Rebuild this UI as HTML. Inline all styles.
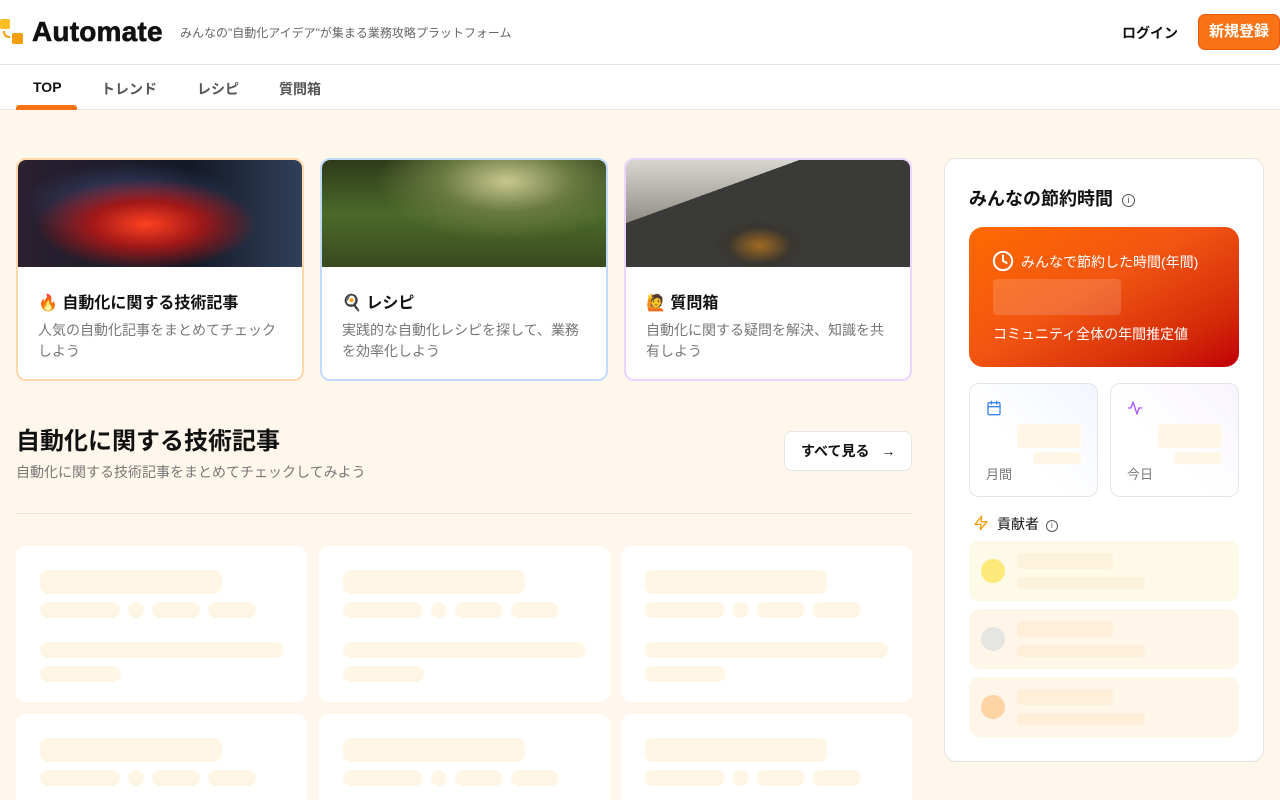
<!DOCTYPE html>
<html><head><meta charset="utf-8"><style>
*{box-sizing:border-box;margin:0;padding:0}
html,body{width:1280px;height:800px;overflow:hidden}
body{background:#fff7ec;font-family:"Liberation Sans","Noto Sans CJK JP",sans-serif;color:#111;position:relative}
.hdr{position:absolute;left:0;top:0;width:1280px;height:65px;background:#fff;border-bottom:1px solid #e5e5e5}
.nav{position:absolute;left:0;top:65px;width:1280px;height:45px;background:#fff;border-bottom:1px solid #e5e5e5}
.nav span{position:absolute;top:14px;font-size:14px;font-weight:bold;color:#555}
.abs{position:absolute}
.card{position:absolute;top:158px;width:288px;height:223px;background:#fff;border-radius:10px;border:2px solid;overflow:hidden}
.card .img{height:107px}
.card h3{position:absolute;left:20px;top:129px;font-size:16px;font-weight:bold}
.card p{position:absolute;left:20px;top:160px;width:250px;font-size:14px;line-height:21px;color:#777}
.sk{position:absolute;background:#fff6e6;border-radius:8px}
.sc{position:absolute;width:291px;height:156px;background:#fff;border-radius:10px}
</style></head><body>
<div class="hdr">
 <div class="abs" style="left:0;top:19px;width:10px;height:10px;background:#fbbf24;border-radius:2px"></div>
 <div class="abs" style="left:3px;top:31px;width:7px;height:7px;border-left:2px solid #f59e0b;border-bottom:2px solid #f59e0b;border-radius:0 0 0 6px"></div>
 <div class="abs" style="left:12px;top:33px;width:11px;height:11px;background:#f59e0b;border-radius:2px"></div>
 <div class="abs" style="left:32px;top:16px;font-size:28px;font-weight:bold;line-height:32px;transform:scaleX(1.0);transform-origin:left;letter-spacing:0.2px;-webkit-text-stroke:0.6px #111">Automate</div>
 <div class="abs" style="left:180px;top:24px;font-size:12px;color:#666">みんなの"自動化アイデア"が集まる業務攻略プラットフォーム</div>
 <div class="abs" style="left:1122px;top:23px;font-size:14px;font-weight:bold">ログイン</div>
 <div class="abs" style="left:1198px;top:14px;width:82px;height:36px;background:#f97316;border:1px solid #ea580c;border-radius:7px;color:#fff;font-size:15px;font-weight:bold;text-align:center;line-height:34px">新規登録</div>
</div>
<div class="nav">
 <span style="left:33px;color:#111">TOP</span><span style="left:101px">トレンド</span><span style="left:197px">レシピ</span><span style="left:279px">質問箱</span>
 <div class="abs" style="left:16px;top:40px;width:61px;height:5px;background:#f97316;border-radius:3px 3px 0 0"></div>
</div>

<div class="card" style="left:16px;border-color:#fed7aa"><div class="img" style="background:radial-gradient(ellipse at 45% 60%,#ff4020 0,#a01818 25%,transparent 50%),radial-gradient(ellipse at 40% 40%,#3a4a78 0,transparent 45%),linear-gradient(90deg,#2a2030,#141826 60%,#30405a)"></div>
<h3>🔥 自動化に関する技術記事</h3><p>人気の自動化記事をまとめてチェックしよう</p></div>
<div class="card" style="left:320px;border-color:#bfdbfe"><div class="img" style="background:radial-gradient(ellipse at 65% 20%,#c8c890 0,#6a7a40 25%,transparent 50%),linear-gradient(180deg,#2e3a1a,#4a6a28 50%,#3a4a20)"></div>
<h3>🍳 レシピ</h3><p>実践的な自動化レシピを探して、業務を効率化しよう</p></div>
<div class="card" style="left:624px;border-color:#e9d5ff"><div class="img" style="background:radial-gradient(ellipse at 47% 80%,#a06a20 0,#3a3630 15%,transparent 22%),linear-gradient(160deg,transparent 30%,#3a3a38 30%),linear-gradient(180deg,#d8d6d0,#9a9890 50%,#6a5a3a)"></div>
<h3>🙋 質問箱</h3><p>自動化に関する疑問を解決、知識を共有しよう</p></div>

<div class="abs" style="left:16px;top:421px;font-size:24px;font-weight:bold">自動化に関する技術記事</div>
<div class="abs" style="left:16px;top:462px;font-size:14px;color:#777">自動化に関する技術記事をまとめてチェックしてみよう</div>
<div class="abs" style="left:784px;top:431px;width:128px;height:40px;background:#fff;border:1px solid #e5e5e5;border-radius:8px;font-size:14px;font-weight:bold;line-height:38px;padding-left:16px">すべて見る <span style="margin-left:8px">→</span></div>
<div class="abs" style="left:16px;top:513px;width:896px;height:1px;background:#e8e0d4"></div>

<div id="sks"></div>
<script>
var h='';[16,319,621].forEach(function(x){[546,714].forEach(function(y){
h+='<div class="sc" style="left:'+x+'px;top:'+y+'px"></div>';
var b=[[24,24,182,24],[24,56,80,16],[112,56,16,16],[136,56,48,16],[192,56,48,16],[24,96,243,16],[24,120,81,16]];
b.forEach(function(r){h+='<div class="sk" style="left:'+(x+r[0])+'px;top:'+(y+r[1])+'px;width:'+r[2]+'px;height:'+r[3]+'px"></div>'});});});
document.getElementById('sks').innerHTML=h;
</script>

<div class="abs" style="left:944px;top:158px;width:320px;height:604px;background:#fff;border:1px solid #e2e2e2;border-radius:12px"></div>
<div class="abs" style="left:969px;top:185px;font-size:18px;font-weight:bold">みんなの節約時間 <span style="display:inline-block;width:13px;height:13px;border:1.3px solid #555;border-radius:50%;font-size:9px;line-height:11px;text-align:center;vertical-align:2px;margin-left:4px;font-weight:normal;color:#555">i</span></div>
<div class="abs" style="left:969px;top:227px;width:270px;height:140px;border-radius:14px;background:linear-gradient(150deg,#ff6a00,#f25512 45%,#d42a08 80%,#c00008)"></div>
<svg class="abs" style="left:992px;top:250px" width="22" height="22" viewBox="0 0 24 24" fill="none" stroke="#fff" stroke-width="2.2" stroke-linecap="round"><circle cx="12" cy="12" r="10"/><path d="M12 6v6l4 2"/></svg>
<div class="abs" style="left:1021px;top:252px;font-size:14px;color:#fff">みんなで節約した時間(年間)</div>
<div class="abs" style="left:993px;top:279px;width:128px;height:36px;background:rgba(255,255,255,0.15);border-radius:4px"></div>
<div class="abs" style="left:993px;top:324px;font-size:14px;color:#fff">コミュニティ全体の年間推定値</div>

<div class="abs" style="left:969px;top:383px;width:129px;height:114px;border:1px solid #e5e5e5;border-radius:10px;background:linear-gradient(225deg,#f2f6ff,#fff 60%)"></div>
<svg class="abs" style="left:986px;top:400px" width="16" height="16" viewBox="0 0 24 24" fill="none" stroke="#3b82f6" stroke-width="2" stroke-linecap="round"><rect x="3" y="4" width="18" height="18" rx="2"/><path d="M16 2v4M8 2v4M3 10h18"/></svg>
<div class="sk" style="left:1017px;top:424px;width:64px;height:24px;border-radius:4px"></div>
<div class="sk" style="left:1033px;top:452px;width:48px;height:12px;border-radius:4px"></div>
<div class="abs" style="left:986px;top:464px;font-size:13px;color:#777">月間</div>
<div class="abs" style="left:1110px;top:383px;width:129px;height:114px;border:1px solid #e5e5e5;border-radius:10px;background:linear-gradient(225deg,#f8f4ff,#fff 60%)"></div>
<svg class="abs" style="left:1127px;top:400px" width="16" height="16" viewBox="0 0 24 24" fill="none" stroke="#a855f7" stroke-width="2" stroke-linecap="round" stroke-linejoin="round"><path d="M22 12h-4l-3 9L9 3l-3 9H2"/></svg>
<div class="sk" style="left:1158px;top:424px;width:64px;height:24px;border-radius:4px"></div>
<div class="sk" style="left:1174px;top:452px;width:48px;height:12px;border-radius:4px"></div>
<div class="abs" style="left:1127px;top:464px;font-size:13px;color:#777">今日</div>

<svg class="abs" style="left:973px;top:515px" width="16" height="16" viewBox="0 0 24 24" fill="none" stroke="#f59e0b" stroke-width="2" stroke-linejoin="round"><path d="M13 2L3 14h9l-1 8 10-12h-9l1-8z"/></svg>
<div class="abs" style="left:997px;top:514px;font-size:14px">貢献者 <span style="display:inline-block;width:12px;height:12px;border:1.2px solid #555;border-radius:50%;font-size:8px;line-height:10px;text-align:center;vertical-align:1px;margin-left:3px;color:#555">i</span></div>

<div class="abs" style="left:969px;top:541px;width:270px;height:60px;background:#fefae8;border-radius:10px"></div>
<div class="abs" style="left:981px;top:559px;width:24px;height:24px;background:#fde97a;border-radius:50%"></div>
<div class="sk" style="left:1017px;top:553px;width:96px;height:16px;border-radius:4px;background:#fdf3dc"></div>
<div class="sk" style="left:1017px;top:577px;width:128px;height:12px;border-radius:4px;background:#fdf3dc"></div>
<div class="abs" style="left:969px;top:609px;width:270px;height:60px;background:#fff5e8;border-radius:10px"></div>
<div class="abs" style="left:981px;top:627px;width:24px;height:24px;background:#e5e5e3;border-radius:50%"></div>
<div class="sk" style="left:1017px;top:621px;width:96px;height:16px;border-radius:4px;background:#ffefd9"></div>
<div class="sk" style="left:1017px;top:645px;width:128px;height:12px;border-radius:4px;background:#ffefd9"></div>
<div class="abs" style="left:969px;top:677px;width:270px;height:60px;background:#fff5e8;border-radius:10px"></div>
<div class="abs" style="left:981px;top:695px;width:24px;height:24px;background:#fed4a4;border-radius:50%"></div>
<div class="sk" style="left:1017px;top:689px;width:96px;height:16px;border-radius:4px;background:#ffefd9"></div>
<div class="sk" style="left:1017px;top:713px;width:128px;height:12px;border-radius:4px;background:#ffefd9"></div>
</body></html>
